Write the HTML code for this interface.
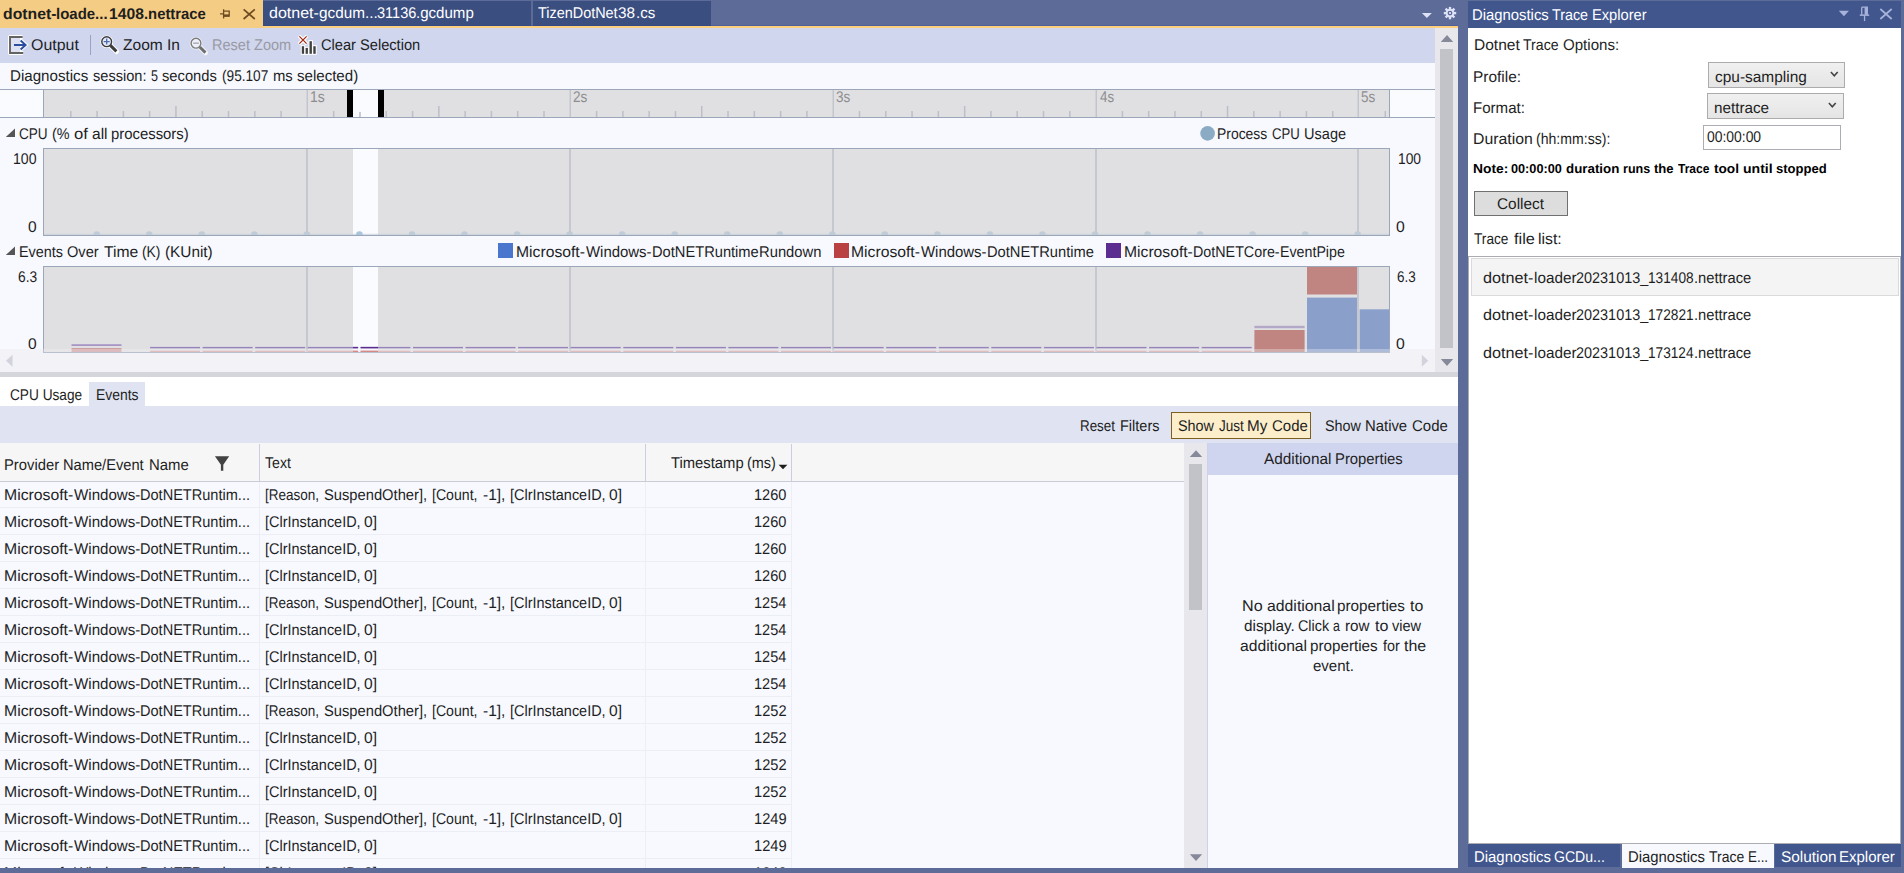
<!DOCTYPE html>
<html><head><meta charset="utf-8"><title>Diagnostics</title>
<style>
html,body{margin:0;padding:0}
body{width:1904px;height:873px;overflow:hidden;background:#5d6b99;position:relative;font-family:"Liberation Sans",sans-serif}
#r{position:absolute;left:0;top:0;width:1904px;height:873px;overflow:hidden}
#r div{position:absolute}
.a{position:absolute;overflow:visible}
#r div.t{white-space:nowrap;line-height:20px;height:20px;transform-origin:0 0;text-rendering:geometricPrecision}
#clip{position:absolute;left:0;top:0;width:1904px;height:868px;overflow:hidden}
</style></head><body><div id="r"><div id="clip">
<div style="left:0px;top:0px;width:263px;height:28px;background:#f5cc84;"></div>
<div style="left:263px;top:1px;width:268px;height:25px;background:#3b4e80;"></div>
<div style="left:533px;top:1px;width:178px;height:25px;background:#3b4e80;"></div>
<div style="left:263px;top:25px;width:1195px;height:1px;background:rgba(40,64,150,0.22);"></div>
<div style="left:263px;top:26px;width:1195px;height:2px;background:#fcd07c;"></div>
<div class="t" style="left:2.96px;top:5px;font-size:15.5px;color:#1e1e1e;transform:scaleX(1.0185);font-weight:700;">dotnet-</div>
<div class="t" style="left:56.01px;top:5px;font-size:15.5px;color:#1e1e1e;transform:scaleX(0.9659);font-weight:700;">loade...</div>
<div class="t" style="left:108.79px;top:5px;font-size:15.5px;color:#1e1e1e;transform:scaleX(1.0121);font-weight:700;">1408</div>
<div class="t" style="left:144.24px;top:5px;font-size:15.5px;color:#1e1e1e;transform:scaleX(0.9568);font-weight:700;">.nettrace</div>
<div class="t" style="left:269.06px;top:4px;font-size:15.5px;color:#ffffff;transform:scaleX(1.0319);">dotnet-</div>
<div class="t" style="left:319.08px;top:4px;font-size:15.5px;color:#ffffff;transform:scaleX(0.9882);">gcdum...</div>
<div class="t" style="left:376.81px;top:4px;font-size:15.5px;color:#ffffff;transform:scaleX(0.9399);">31136</div>
<div class="t" style="left:416.46px;top:4px;font-size:15.5px;color:#ffffff;transform:scaleX(0.9722);">.gcdump</div>
<div class="t" style="left:538.45px;top:4px;font-size:15.5px;color:#ffffff;transform:scaleX(0.9304);">TizenDotNet</div>
<div class="t" style="left:618.38px;top:4px;font-size:15.5px;color:#ffffff;transform:scaleX(0.9875);">38</div>
<div class="t" style="left:635.56px;top:4px;font-size:15.5px;color:#ffffff;transform:scaleX(0.9734);">.cs</div>
<div style="left:0px;top:28px;width:1435px;height:35px;background:#cfd6ee;"></div>
<div class="t" style="left:31.23px;top:36px;font-size:15.5px;color:#1e1e1e;transform:scaleX(1.0273);">Output</div>
<div style="left:90px;top:35px;width:1px;height:20px;background:#9aa3c4;"></div>
<div class="t" style="left:123.00px;top:36px;font-size:15.5px;color:#1e1e1e;transform:scaleX(1.0023);">Zoom In</div>
<div class="t" style="left:211.83px;top:36px;font-size:15.5px;color:#9a9aa4;transform:scaleX(0.9376);">Reset Zoom</div>
<div class="t" style="left:321.29px;top:36px;font-size:15.5px;color:#1e1e1e;transform:scaleX(0.9432);">Clear Selection</div>
<div style="left:0px;top:63px;width:1435px;height:309px;background:#f7f9fe;"></div>
<div class="t" style="left:10.38px;top:67px;font-size:15.5px;color:#1e1e1e;transform:scaleX(0.9761);">Diagnostics</div>
<div class="t" style="left:93.33px;top:67px;font-size:15.5px;color:#1e1e1e;transform:scaleX(0.9403);">session:</div>
<div class="t" style="left:150.59px;top:67px;font-size:15.5px;color:#1e1e1e;transform:scaleX(0.8136);">5</div>
<div class="t" style="left:162.33px;top:67px;font-size:15.5px;color:#1e1e1e;transform:scaleX(0.9498);">seconds</div>
<div class="t" style="left:221.52px;top:67px;font-size:15.5px;color:#1e1e1e;transform:scaleX(0.8806);">(95.107</div>
<div class="t" style="left:273.04px;top:67px;font-size:15.5px;color:#1e1e1e;transform:scaleX(0.9569);">ms</div>
<div class="t" style="left:296.91px;top:67px;font-size:15.5px;color:#1e1e1e;transform:scaleX(0.9724);">selected)</div>
<div style="left:0px;top:89px;width:1435px;height:1px;background:#9ca6b9;"></div>
<div style="left:0px;top:117px;width:1435px;height:1px;background:#9ca6b9;"></div>
<div style="left:0px;top:90px;width:43px;height:27px;background:#fafbff;"></div>
<div style="left:1390px;top:90px;width:45px;height:27px;background:#fafbff;"></div>
<div style="left:43px;top:90px;width:1px;height:27px;background:#9ca6b9;"></div>
<div style="left:1389px;top:90px;width:1px;height:27px;background:#9ca6b9;"></div>
<div style="left:44px;top:90px;width:1345px;height:27px;background:#e0e0e2;"></div>
<svg class="a" style="left:0;top:0" width="1435" height="118"><rect x="70.04" y="111" width="1.5" height="6" fill="#bcbfc9"/><rect x="96.33" y="111" width="1.5" height="6" fill="#bcbfc9"/><rect x="122.62" y="111" width="1.5" height="6" fill="#bcbfc9"/><rect x="148.91" y="111" width="1.5" height="6" fill="#bcbfc9"/><rect x="175.20" y="106" width="1.5" height="11" fill="#bcbfc9"/><rect x="201.49" y="111" width="1.5" height="6" fill="#bcbfc9"/><rect x="227.78" y="111" width="1.5" height="6" fill="#bcbfc9"/><rect x="254.07" y="111" width="1.5" height="6" fill="#bcbfc9"/><rect x="280.36" y="111" width="1.5" height="6" fill="#bcbfc9"/><rect x="332.94" y="111" width="1.5" height="6" fill="#bcbfc9"/><rect x="359.23" y="111" width="1.5" height="6" fill="#bcbfc9"/><rect x="385.52" y="111" width="1.5" height="6" fill="#bcbfc9"/><rect x="411.81" y="111" width="1.5" height="6" fill="#bcbfc9"/><rect x="438.10" y="106" width="1.5" height="11" fill="#bcbfc9"/><rect x="464.39" y="111" width="1.5" height="6" fill="#bcbfc9"/><rect x="490.68" y="111" width="1.5" height="6" fill="#bcbfc9"/><rect x="516.97" y="111" width="1.5" height="6" fill="#bcbfc9"/><rect x="543.26" y="111" width="1.5" height="6" fill="#bcbfc9"/><rect x="595.84" y="111" width="1.5" height="6" fill="#bcbfc9"/><rect x="622.13" y="111" width="1.5" height="6" fill="#bcbfc9"/><rect x="648.42" y="111" width="1.5" height="6" fill="#bcbfc9"/><rect x="674.71" y="111" width="1.5" height="6" fill="#bcbfc9"/><rect x="701.00" y="106" width="1.5" height="11" fill="#bcbfc9"/><rect x="727.29" y="111" width="1.5" height="6" fill="#bcbfc9"/><rect x="753.58" y="111" width="1.5" height="6" fill="#bcbfc9"/><rect x="779.87" y="111" width="1.5" height="6" fill="#bcbfc9"/><rect x="806.16" y="111" width="1.5" height="6" fill="#bcbfc9"/><rect x="858.74" y="111" width="1.5" height="6" fill="#bcbfc9"/><rect x="885.03" y="111" width="1.5" height="6" fill="#bcbfc9"/><rect x="911.32" y="111" width="1.5" height="6" fill="#bcbfc9"/><rect x="937.61" y="111" width="1.5" height="6" fill="#bcbfc9"/><rect x="963.90" y="106" width="1.5" height="11" fill="#bcbfc9"/><rect x="990.19" y="111" width="1.5" height="6" fill="#bcbfc9"/><rect x="1016.48" y="111" width="1.5" height="6" fill="#bcbfc9"/><rect x="1042.77" y="111" width="1.5" height="6" fill="#bcbfc9"/><rect x="1069.06" y="111" width="1.5" height="6" fill="#bcbfc9"/><rect x="1121.64" y="111" width="1.5" height="6" fill="#bcbfc9"/><rect x="1147.93" y="111" width="1.5" height="6" fill="#bcbfc9"/><rect x="1174.22" y="111" width="1.5" height="6" fill="#bcbfc9"/><rect x="1200.51" y="111" width="1.5" height="6" fill="#bcbfc9"/><rect x="1226.80" y="106" width="1.5" height="11" fill="#bcbfc9"/><rect x="1253.09" y="111" width="1.5" height="6" fill="#bcbfc9"/><rect x="1279.38" y="111" width="1.5" height="6" fill="#bcbfc9"/><rect x="1305.67" y="111" width="1.5" height="6" fill="#bcbfc9"/><rect x="1331.96" y="111" width="1.5" height="6" fill="#bcbfc9"/><rect x="1384.54" y="111" width="1.5" height="6" fill="#bcbfc9"/><rect x="306.5" y="90" width="1.5" height="27" fill="#c3c5cd"/><rect x="569.5" y="90" width="1.5" height="27" fill="#c3c5cd"/><rect x="832.5" y="90" width="1.5" height="27" fill="#c3c5cd"/><rect x="1095.5" y="90" width="1.5" height="27" fill="#c3c5cd"/><rect x="1357.5" y="90" width="1.5" height="27" fill="#c3c5cd"/></svg>
<div class="t" style="left:309.99px;top:88px;font-size:15.5px;color:#8d8d90;transform:scaleX(0.9017);">1s</div>
<div class="t" style="left:573.34px;top:88px;font-size:15.5px;color:#8d8d90;transform:scaleX(0.8793);">2s</div>
<div class="t" style="left:836.45px;top:88px;font-size:15.5px;color:#8d8d90;transform:scaleX(0.8721);">3s</div>
<div class="t" style="left:1099.68px;top:88px;font-size:15.5px;color:#8d8d90;transform:scaleX(0.8581);">4s</div>
<div class="t" style="left:1361.45px;top:88px;font-size:15.5px;color:#8d8d90;transform:scaleX(0.8721);">5s</div>
<div style="left:353px;top:90px;width:25px;height:27px;background:#fafbff;"></div>
<div style="left:359.3px;top:112px;width:1.5px;height:5px;background:#c9ccd8;"></div>
<div style="left:347px;top:90px;width:6px;height:27px;background:#000;"></div>
<div style="left:378px;top:90px;width:6px;height:27px;background:#000;"></div>
<svg class="a" style="left:5px;top:128px" width="11" height="10"><path d="M10 0.5V9H0.8Z" fill="#555"/></svg>
<div class="t" style="left:19.24px;top:125px;font-size:15.5px;color:#1e1e1e;transform:scaleX(0.8748);">CPU</div>
<div class="t" style="left:51.97px;top:125px;font-size:15.5px;color:#1e1e1e;transform:scaleX(0.9266);">(%</div>
<div class="t" style="left:73.83px;top:125px;font-size:15.5px;color:#1e1e1e;transform:scaleX(1.0747);">of</div>
<div class="t" style="left:91.57px;top:125px;font-size:15.5px;color:#1e1e1e;transform:scaleX(1.0018);">all</div>
<div class="t" style="left:111.34px;top:125px;font-size:15.5px;color:#1e1e1e;transform:scaleX(0.9595);">processors)</div>
<svg class="a" style="left:1200px;top:126px" width="16" height="16"><circle cx="7.6" cy="7.4" r="7.3" fill="#8babc5"/></svg>
<div class="t" style="left:1217.28px;top:125px;font-size:15.5px;color:#1e1e1e;transform:scaleX(0.8977);">Process</div>
<div class="t" style="left:1271.76px;top:125px;font-size:15.5px;color:#1e1e1e;transform:scaleX(0.8488);">CPU</div>
<div class="t" style="left:1303.54px;top:125px;font-size:15.5px;color:#1e1e1e;transform:scaleX(0.9395);">Usage</div>
<div style="left:43px;top:148px;width:1347px;height:88px;background:#e0e0e2;"></div>
<div style="left:353px;top:149px;width:25px;height:86px;background:#fafbff;"></div>
<div style="left:306px;top:149px;width:2px;height:86px;background:#c6c8cf;"></div>
<div style="left:569px;top:149px;width:2px;height:86px;background:#c6c8cf;"></div>
<div style="left:832px;top:149px;width:2px;height:86px;background:#c6c8cf;"></div>
<div style="left:1095px;top:149px;width:2px;height:86px;background:#c6c8cf;"></div>
<div style="left:1357px;top:149px;width:2px;height:86px;background:#c6c8cf;"></div>
<div class="t" style="left:13.48px;top:150px;font-size:15.5px;color:#1e1e1e;transform:scaleX(0.9078);">100</div>
<div class="t" style="left:28.37px;top:218px;font-size:15.5px;color:#1e1e1e;transform:scaleX(1.0034);">0</div>
<div class="t" style="left:1397.50px;top:150px;font-size:15.5px;color:#1e1e1e;transform:scaleX(0.8912);">100</div>
<div class="t" style="left:1396.36px;top:218px;font-size:15.5px;color:#1e1e1e;transform:scaleX(1.0169);">0</div>
<svg class="a" style="left:0;top:0" width="1435" height="235"><defs><clipPath id="cc"><rect x="44" y="149" width="1345" height="86"/></clipPath></defs><g clip-path="url(#cc)"><rect x="44" y="233.8" width="1345" height="1.2" fill="#c5d1dc" opacity="0.7"/><circle cx="96.7" cy="234.6" r="3.3" fill="#bfccd7"/><circle cx="149.3" cy="234.6" r="3.3" fill="#bfccd7"/><circle cx="201.8" cy="234.6" r="3.3" fill="#bfccd7"/><circle cx="254.4" cy="234.6" r="3.3" fill="#bfccd7"/><circle cx="306.9" cy="234.6" r="3.3" fill="#bfccd7"/><circle cx="359.4" cy="234.6" r="3.3" fill="#a9c5db"/><circle cx="412.0" cy="234.6" r="3.3" fill="#bfccd7"/><circle cx="464.5" cy="234.6" r="3.3" fill="#bfccd7"/><circle cx="517.1" cy="234.6" r="3.3" fill="#bfccd7"/><circle cx="569.6" cy="234.6" r="3.3" fill="#bfccd7"/><circle cx="622.1" cy="234.6" r="3.3" fill="#bfccd7"/><circle cx="674.7" cy="234.6" r="3.3" fill="#bfccd7"/><circle cx="727.2" cy="234.6" r="3.3" fill="#bfccd7"/><circle cx="779.8" cy="234.6" r="3.3" fill="#bfccd7"/><circle cx="832.3" cy="234.6" r="3.3" fill="#bfccd7"/><circle cx="884.8" cy="234.6" r="3.3" fill="#bfccd7"/><circle cx="937.4" cy="234.6" r="3.3" fill="#bfccd7"/><circle cx="989.9" cy="234.6" r="3.3" fill="#bfccd7"/><circle cx="1042.5" cy="234.6" r="3.3" fill="#bfccd7"/><circle cx="1095.0" cy="234.6" r="3.3" fill="#bfccd7"/><circle cx="1147.5" cy="234.6" r="3.3" fill="#bfccd7"/><circle cx="1200.1" cy="234.6" r="3.3" fill="#bfccd7"/><circle cx="1252.6" cy="234.6" r="3.3" fill="#bfccd7"/><circle cx="1305.2" cy="234.6" r="3.3" fill="#bfccd7"/><circle cx="1357.7" cy="234.6" r="3.3" fill="#bfccd7"/></g></svg>
<div style="left:43px;top:148px;width:1347px;height:88px;box-sizing:border-box;border:1px solid #9ca6b9;"></div>
<svg class="a" style="left:5px;top:246px" width="11" height="10"><path d="M10 0.5V9H0.8Z" fill="#555"/></svg>
<div class="t" style="left:19.44px;top:243px;font-size:15.5px;color:#1e1e1e;transform:scaleX(0.9293);">Events</div>
<div class="t" style="left:67.49px;top:243px;font-size:15.5px;color:#1e1e1e;transform:scaleX(0.9415);">Over</div>
<div class="t" style="left:103.62px;top:243px;font-size:15.5px;color:#1e1e1e;transform:scaleX(1.0129);">Time</div>
<div class="t" style="left:141.81px;top:243px;font-size:15.5px;color:#1e1e1e;transform:scaleX(0.8907);">(K)</div>
<div class="t" style="left:164.51px;top:243px;font-size:15.5px;color:#1e1e1e;transform:scaleX(0.9898);">(KUnit)</div>
<div style="left:498px;top:243px;width:15px;height:15px;background:#4a76ce;"></div>
<div class="t" style="left:515.93px;top:243px;font-size:15.5px;color:#1e1e1e;transform:scaleX(1.0132);">Microsoft-</div>
<div class="t" style="left:585.88px;top:243px;font-size:15.5px;color:#1e1e1e;transform:scaleX(0.9636);">Windows-</div>
<div class="t" style="left:651.72px;top:243px;font-size:15.5px;color:#1e1e1e;transform:scaleX(0.9459);">DotNETRuntime</div>
<div class="t" style="left:758.91px;top:243px;font-size:15.5px;color:#1e1e1e;transform:scaleX(0.9534);">Rundown</div>
<div style="left:834px;top:243px;width:15px;height:15px;background:#b94141;"></div>
<div class="t" style="left:851.03px;top:243px;font-size:15.5px;color:#1e1e1e;transform:scaleX(1.0132);">Microsoft-</div>
<div class="t" style="left:920.98px;top:243px;font-size:15.5px;color:#1e1e1e;transform:scaleX(0.9636);">Windows-</div>
<div class="t" style="left:986.82px;top:243px;font-size:15.5px;color:#1e1e1e;transform:scaleX(0.9477);">DotNETRuntime</div>
<div style="left:1106px;top:243px;width:15px;height:15px;background:#5b2d90;"></div>
<div class="t" style="left:1123.64px;top:243px;font-size:15.5px;color:#1e1e1e;transform:scaleX(1.0117);">Microsoft-</div>
<div class="t" style="left:1192.85px;top:243px;font-size:15.5px;color:#1e1e1e;transform:scaleX(0.9228);">DotNETCore-</div>
<div class="t" style="left:1280.15px;top:243px;font-size:15.5px;color:#1e1e1e;transform:scaleX(0.9178);">EventPipe</div>
<div style="left:43px;top:266px;width:1347px;height:87px;background:#e0e0e2;"></div>
<div style="left:353px;top:267px;width:25px;height:85px;background:#fafbff;"></div>
<div style="left:306px;top:267px;width:2px;height:85px;background:#c6c8cf;"></div>
<div style="left:569px;top:267px;width:2px;height:85px;background:#c6c8cf;"></div>
<div style="left:832px;top:267px;width:2px;height:85px;background:#c6c8cf;"></div>
<div style="left:1095px;top:267px;width:2px;height:85px;background:#c6c8cf;"></div>
<div style="left:1357px;top:267px;width:2px;height:85px;background:#c6c8cf;"></div>
<div class="t" style="left:17.83px;top:268px;font-size:15.5px;color:#1e1e1e;transform:scaleX(0.8894);">6.3</div>
<div class="t" style="left:28.37px;top:335px;font-size:15.5px;color:#1e1e1e;transform:scaleX(1.0034);">0</div>
<div class="t" style="left:1396.85px;top:268px;font-size:15.5px;color:#1e1e1e;transform:scaleX(0.8696);">6.3</div>
<div class="t" style="left:1396.36px;top:335px;font-size:15.5px;color:#1e1e1e;transform:scaleX(1.0169);">0</div>
<svg class="a" style="left:0;top:0" width="1435" height="353"><rect x="71.5" y="344.2" width="50" height="1.8" fill="#a897c6"/><rect x="71.5" y="348" width="50" height="4" fill="#cf9f9f"/><rect x="150.1" y="346.9" width="50" height="1.4" fill="#9583ba"/><rect x="150.1" y="350.7" width="50" height="1.4" fill="#dba29e"/><rect x="202.6" y="346.9" width="50" height="1.4" fill="#9583ba"/><rect x="202.6" y="350.7" width="50" height="1.4" fill="#dba29e"/><rect x="255.2" y="346.9" width="50" height="1.4" fill="#9583ba"/><rect x="255.2" y="350.7" width="50" height="1.4" fill="#dba29e"/><rect x="307.8" y="346.9" width="50" height="1.4" fill="#9583ba"/><rect x="307.8" y="350.7" width="50" height="1.4" fill="#dba29e"/><rect x="360.4" y="346.9" width="50" height="1.4" fill="#9583ba"/><rect x="360.4" y="350.7" width="50" height="1.4" fill="#dba29e"/><rect x="413.0" y="346.9" width="50" height="1.4" fill="#9583ba"/><rect x="413.0" y="350.7" width="50" height="1.4" fill="#dba29e"/><rect x="465.5" y="346.9" width="50" height="1.4" fill="#9583ba"/><rect x="465.5" y="350.7" width="50" height="1.4" fill="#dba29e"/><rect x="518.1" y="346.9" width="50" height="1.4" fill="#9583ba"/><rect x="518.1" y="350.7" width="50" height="1.4" fill="#dba29e"/><rect x="570.7" y="346.9" width="50" height="1.4" fill="#9583ba"/><rect x="570.7" y="350.7" width="50" height="1.4" fill="#dba29e"/><rect x="623.3" y="346.9" width="50" height="1.4" fill="#9583ba"/><rect x="623.3" y="350.7" width="50" height="1.4" fill="#dba29e"/><rect x="675.9" y="346.9" width="50" height="1.4" fill="#9583ba"/><rect x="675.9" y="350.7" width="50" height="1.4" fill="#dba29e"/><rect x="728.4" y="346.9" width="50" height="1.4" fill="#9583ba"/><rect x="728.4" y="350.7" width="50" height="1.4" fill="#dba29e"/><rect x="781.0" y="346.9" width="50" height="1.4" fill="#9583ba"/><rect x="781.0" y="350.7" width="50" height="1.4" fill="#dba29e"/><rect x="833.6" y="346.9" width="50" height="1.4" fill="#9583ba"/><rect x="833.6" y="350.7" width="50" height="1.4" fill="#dba29e"/><rect x="886.2" y="346.9" width="50" height="1.4" fill="#9583ba"/><rect x="886.2" y="350.7" width="50" height="1.4" fill="#dba29e"/><rect x="938.8" y="346.9" width="50" height="1.4" fill="#9583ba"/><rect x="938.8" y="350.7" width="50" height="1.4" fill="#dba29e"/><rect x="991.3" y="346.9" width="50" height="1.4" fill="#9583ba"/><rect x="991.3" y="350.7" width="50" height="1.4" fill="#dba29e"/><rect x="1043.9" y="346.9" width="50" height="1.4" fill="#9583ba"/><rect x="1043.9" y="350.7" width="50" height="1.4" fill="#dba29e"/><rect x="1096.5" y="346.9" width="50" height="1.4" fill="#9583ba"/><rect x="1096.5" y="350.7" width="50" height="1.4" fill="#dba29e"/><rect x="1149.1" y="346.9" width="50" height="1.4" fill="#9583ba"/><rect x="1149.1" y="350.7" width="50" height="1.4" fill="#dba29e"/><rect x="1201.7" y="346.9" width="50" height="1.4" fill="#9583ba"/><rect x="1201.7" y="350.7" width="50" height="1.4" fill="#dba29e"/><rect x="1254.4" y="325.8" width="50.2" height="2.4" fill="#b3a8c8"/><rect x="1254.4" y="330" width="50.2" height="22" fill="#c08481"/><rect x="1307" y="267" width="50" height="27.5" fill="#c08481"/><rect x="1307" y="297.6" width="50" height="54.4" fill="#8aa0cb"/><rect x="1359.6" y="309.3" width="29.4" height="42.7" fill="#8aa0cb"/><rect x="353" y="346.9" width="5.2" height="1.4" fill="#5b2d90"/><rect x="360.7" y="346.9" width="17.3" height="1.4" fill="#5b2d90"/><rect x="353" y="350.7" width="5.2" height="1.4" fill="#c9504d"/><rect x="360.7" y="350.7" width="17.3" height="1.4" fill="#c9504d"/></svg>
<div style="left:43px;top:266px;width:1347px;height:87px;box-sizing:border-box;border:1px solid #9ca6b9;"></div>
<div style="left:43px;top:349px;width:1347px;height:4px;background:rgba(242,242,247,0.35);"></div>
<div style="left:0px;top:349px;width:43px;height:4px;background:#f2f2f7;"></div>
<div style="left:1390px;top:349px;width:45px;height:4px;background:#f2f2f7;"></div>
<div style="left:0px;top:353px;width:1435px;height:19px;background:#f2f2f7;"></div>
<svg class="a" style="left:4.5px;top:354.4px" width="10" height="14"><path d="M7.5 0.8V12.8L1 6.8Z" fill="#d2d3dc"/></svg>
<svg class="a" style="left:1420px;top:354px" width="10" height="14"><path d="M1.8 0.8V12.8L8.3 6.8Z" fill="#d2d3dc"/></svg>
<div style="left:1435px;top:28px;width:23px;height:344px;background:#e8e8ec;"></div>
<div style="left:1440px;top:49px;width:13px;height:299px;background:#c2c3c9;"></div>
<svg class="a" style="left:1440px;top:34px" width="14" height="9"><path d="M0.8 8L7 1L13.2 8Z" fill="#868999"/></svg>
<svg class="a" style="left:1440px;top:358px" width="14" height="9"><path d="M0.8 1L7 8L13.2 1Z" fill="#868999"/></svg>
<div style="left:0px;top:372px;width:1458px;height:5px;background:#d5d6db;"></div>
<div style="left:0px;top:377px;width:1458px;height:29px;background:#ffffff;"></div>
<div style="left:89px;top:382px;width:56px;height:24px;background:#e0e4f2;"></div>
<div class="t" style="left:9.64px;top:386px;font-size:15.5px;color:#1e1e1e;transform:scaleX(0.8820);">CPU Usage</div>
<div class="t" style="left:95.88px;top:386px;font-size:15.5px;color:#1e1e1e;transform:scaleX(0.8986);">Events</div>
<div style="left:0px;top:406px;width:1458px;height:37px;background:#e0e4f2;"></div>
<div class="t" style="left:1080.22px;top:417px;font-size:15.5px;color:#1e1e1e;transform:scaleX(0.8639);">Reset</div>
<div class="t" style="left:1120.03px;top:417px;font-size:15.5px;color:#1e1e1e;transform:scaleX(0.9358);">Filters</div>
<div style="left:1171px;top:412px;width:140px;height:27px;background:#fceecb;box-sizing:border-box;border:1px solid #7d6020;"></div>
<div class="t" style="left:1177.90px;top:417px;font-size:15.5px;color:#1e1e1e;transform:scaleX(0.9285);">Show</div>
<div class="t" style="left:1218.88px;top:417px;font-size:15.5px;color:#1e1e1e;transform:scaleX(0.8747);">Just</div>
<div class="t" style="left:1247.37px;top:417px;font-size:15.5px;color:#1e1e1e;transform:scaleX(0.9858);">My</div>
<div class="t" style="left:1272.08px;top:417px;font-size:15.5px;color:#1e1e1e;transform:scaleX(0.9656);">Code</div>
<div class="t" style="left:1324.91px;top:417px;font-size:15.5px;color:#1e1e1e;transform:scaleX(0.9259);">Show</div>
<div class="t" style="left:1365.40px;top:417px;font-size:15.5px;color:#1e1e1e;transform:scaleX(0.9591);">Native</div>
<div class="t" style="left:1411.78px;top:417px;font-size:15.5px;color:#1e1e1e;transform:scaleX(0.9656);">Code</div>
<div style="left:0px;top:443px;width:1184px;height:38px;background:#f6f6f6;"></div>
<div style="left:0px;top:481px;width:1184px;height:1px;background:#cbccd9;"></div>
<div style="left:0px;top:482px;width:1184px;height:386px;background:#f7f9fe;"></div>
<div style="left:259px;top:444px;width:1px;height:37px;background:#cbcde0;"></div>
<div style="left:259px;top:482px;width:1px;height:386px;background:#eceef6;"></div>
<div style="left:645px;top:444px;width:1px;height:37px;background:#cbcde0;"></div>
<div style="left:645px;top:482px;width:1px;height:386px;background:#eceef6;"></div>
<div style="left:791px;top:444px;width:1px;height:37px;background:#cbcde0;"></div>
<div style="left:791px;top:482px;width:1px;height:386px;background:#eceef6;"></div>
<div class="t" style="left:3.51px;top:456px;font-size:15.5px;color:#1e1e1e;transform:scaleX(0.9550);">Provider</div>
<div class="t" style="left:63.12px;top:456px;font-size:15.5px;color:#1e1e1e;transform:scaleX(0.9452);">Name/Event</div>
<div class="t" style="left:148.80px;top:456px;font-size:15.5px;color:#1e1e1e;transform:scaleX(0.9620);">Name</div>
<svg class="a" style="left:214px;top:455px" width="17" height="17"><path d="M0.9 1.3H15.2L9.3 9.8V15.8H6.9V9.8Z" fill="#424242"/></svg>
<div class="t" style="left:264.96px;top:454px;font-size:15.5px;color:#1e1e1e;transform:scaleX(0.9107);">Text</div>
<div class="t" style="left:670.84px;top:454px;font-size:15.5px;color:#1e1e1e;transform:scaleX(0.9544);">Timestamp</div>
<div class="t" style="left:747.47px;top:454px;font-size:15.5px;color:#1e1e1e;transform:scaleX(0.9305);">(ms)</div>
<svg class="a" style="left:778px;top:464px" width="10" height="6"><path d="M0.6 0.8H9.4L5 5.3Z" fill="#1e1e1e"/></svg>
<div style="left:0px;top:507px;width:792px;height:1px;background:#eceef6;"></div>
<div class="t" style="left:3.53px;top:486px;font-size:15.5px;color:#1e1e1e;transform:scaleX(1.0178);">Microsoft-</div>
<div class="t" style="left:73.58px;top:486px;font-size:15.5px;color:#1e1e1e;transform:scaleX(0.9755);">Windows-</div>
<div class="t" style="left:140.13px;top:486px;font-size:15.5px;color:#1e1e1e;transform:scaleX(0.9389);">DotNETRuntim...</div>
<div class="t" style="left:265.42px;top:486px;font-size:15.5px;color:#1e1e1e;transform:scaleX(0.8723);">[Reason,</div>
<div class="t" style="left:324.39px;top:486px;font-size:15.5px;color:#1e1e1e;transform:scaleX(0.9495);">SuspendOther],</div>
<div class="t" style="left:431.58px;top:486px;font-size:15.5px;color:#1e1e1e;transform:scaleX(0.9098);">[Count,</div>
<div class="t" style="left:482.87px;top:486px;font-size:15.5px;color:#1e1e1e;transform:scaleX(1.0012);">-1],</div>
<div class="t" style="left:509.65px;top:486px;font-size:15.5px;color:#1e1e1e;transform:scaleX(0.9330);">[ClrInstanceID,</div>
<div class="t" style="left:608.57px;top:486px;font-size:15.5px;color:#1e1e1e;transform:scaleX(1.0044);">0]</div>
<div class="t" style="left:753.94px;top:486px;font-size:15.5px;color:#1e1e1e;transform:scaleX(0.9405);">1260</div>
<div style="left:0px;top:534px;width:792px;height:1px;background:#eceef6;"></div>
<div class="t" style="left:3.53px;top:513px;font-size:15.5px;color:#1e1e1e;transform:scaleX(1.0178);">Microsoft-</div>
<div class="t" style="left:73.58px;top:513px;font-size:15.5px;color:#1e1e1e;transform:scaleX(0.9755);">Windows-</div>
<div class="t" style="left:140.13px;top:513px;font-size:15.5px;color:#1e1e1e;transform:scaleX(0.9389);">DotNETRuntim...</div>
<div class="t" style="left:265.35px;top:513px;font-size:15.5px;color:#1e1e1e;transform:scaleX(0.9330);">[ClrInstanceID,</div>
<div class="t" style="left:364.27px;top:513px;font-size:15.5px;color:#1e1e1e;transform:scaleX(1.0044);">0]</div>
<div class="t" style="left:753.94px;top:513px;font-size:15.5px;color:#1e1e1e;transform:scaleX(0.9405);">1260</div>
<div style="left:0px;top:561px;width:792px;height:1px;background:#eceef6;"></div>
<div class="t" style="left:3.53px;top:540px;font-size:15.5px;color:#1e1e1e;transform:scaleX(1.0178);">Microsoft-</div>
<div class="t" style="left:73.58px;top:540px;font-size:15.5px;color:#1e1e1e;transform:scaleX(0.9755);">Windows-</div>
<div class="t" style="left:140.13px;top:540px;font-size:15.5px;color:#1e1e1e;transform:scaleX(0.9389);">DotNETRuntim...</div>
<div class="t" style="left:265.35px;top:540px;font-size:15.5px;color:#1e1e1e;transform:scaleX(0.9330);">[ClrInstanceID,</div>
<div class="t" style="left:364.27px;top:540px;font-size:15.5px;color:#1e1e1e;transform:scaleX(1.0044);">0]</div>
<div class="t" style="left:753.94px;top:540px;font-size:15.5px;color:#1e1e1e;transform:scaleX(0.9405);">1260</div>
<div style="left:0px;top:588px;width:792px;height:1px;background:#eceef6;"></div>
<div class="t" style="left:3.53px;top:567px;font-size:15.5px;color:#1e1e1e;transform:scaleX(1.0178);">Microsoft-</div>
<div class="t" style="left:73.58px;top:567px;font-size:15.5px;color:#1e1e1e;transform:scaleX(0.9755);">Windows-</div>
<div class="t" style="left:140.13px;top:567px;font-size:15.5px;color:#1e1e1e;transform:scaleX(0.9389);">DotNETRuntim...</div>
<div class="t" style="left:265.35px;top:567px;font-size:15.5px;color:#1e1e1e;transform:scaleX(0.9330);">[ClrInstanceID,</div>
<div class="t" style="left:364.27px;top:567px;font-size:15.5px;color:#1e1e1e;transform:scaleX(1.0044);">0]</div>
<div class="t" style="left:753.94px;top:567px;font-size:15.5px;color:#1e1e1e;transform:scaleX(0.9405);">1260</div>
<div style="left:0px;top:615px;width:792px;height:1px;background:#eceef6;"></div>
<div class="t" style="left:3.53px;top:594px;font-size:15.5px;color:#1e1e1e;transform:scaleX(1.0178);">Microsoft-</div>
<div class="t" style="left:73.58px;top:594px;font-size:15.5px;color:#1e1e1e;transform:scaleX(0.9755);">Windows-</div>
<div class="t" style="left:140.13px;top:594px;font-size:15.5px;color:#1e1e1e;transform:scaleX(0.9389);">DotNETRuntim...</div>
<div class="t" style="left:265.42px;top:594px;font-size:15.5px;color:#1e1e1e;transform:scaleX(0.8723);">[Reason,</div>
<div class="t" style="left:324.39px;top:594px;font-size:15.5px;color:#1e1e1e;transform:scaleX(0.9495);">SuspendOther],</div>
<div class="t" style="left:431.58px;top:594px;font-size:15.5px;color:#1e1e1e;transform:scaleX(0.9098);">[Count,</div>
<div class="t" style="left:482.87px;top:594px;font-size:15.5px;color:#1e1e1e;transform:scaleX(1.0012);">-1],</div>
<div class="t" style="left:509.65px;top:594px;font-size:15.5px;color:#1e1e1e;transform:scaleX(0.9330);">[ClrInstanceID,</div>
<div class="t" style="left:608.57px;top:594px;font-size:15.5px;color:#1e1e1e;transform:scaleX(1.0044);">0]</div>
<div class="t" style="left:753.95px;top:594px;font-size:15.5px;color:#1e1e1e;transform:scaleX(0.9369);">1254</div>
<div style="left:0px;top:642px;width:792px;height:1px;background:#eceef6;"></div>
<div class="t" style="left:3.53px;top:621px;font-size:15.5px;color:#1e1e1e;transform:scaleX(1.0178);">Microsoft-</div>
<div class="t" style="left:73.58px;top:621px;font-size:15.5px;color:#1e1e1e;transform:scaleX(0.9755);">Windows-</div>
<div class="t" style="left:140.13px;top:621px;font-size:15.5px;color:#1e1e1e;transform:scaleX(0.9389);">DotNETRuntim...</div>
<div class="t" style="left:265.35px;top:621px;font-size:15.5px;color:#1e1e1e;transform:scaleX(0.9330);">[ClrInstanceID,</div>
<div class="t" style="left:364.27px;top:621px;font-size:15.5px;color:#1e1e1e;transform:scaleX(1.0044);">0]</div>
<div class="t" style="left:753.95px;top:621px;font-size:15.5px;color:#1e1e1e;transform:scaleX(0.9369);">1254</div>
<div style="left:0px;top:669px;width:792px;height:1px;background:#eceef6;"></div>
<div class="t" style="left:3.53px;top:648px;font-size:15.5px;color:#1e1e1e;transform:scaleX(1.0178);">Microsoft-</div>
<div class="t" style="left:73.58px;top:648px;font-size:15.5px;color:#1e1e1e;transform:scaleX(0.9755);">Windows-</div>
<div class="t" style="left:140.13px;top:648px;font-size:15.5px;color:#1e1e1e;transform:scaleX(0.9389);">DotNETRuntim...</div>
<div class="t" style="left:265.35px;top:648px;font-size:15.5px;color:#1e1e1e;transform:scaleX(0.9330);">[ClrInstanceID,</div>
<div class="t" style="left:364.27px;top:648px;font-size:15.5px;color:#1e1e1e;transform:scaleX(1.0044);">0]</div>
<div class="t" style="left:753.95px;top:648px;font-size:15.5px;color:#1e1e1e;transform:scaleX(0.9369);">1254</div>
<div style="left:0px;top:696px;width:792px;height:1px;background:#eceef6;"></div>
<div class="t" style="left:3.53px;top:675px;font-size:15.5px;color:#1e1e1e;transform:scaleX(1.0178);">Microsoft-</div>
<div class="t" style="left:73.58px;top:675px;font-size:15.5px;color:#1e1e1e;transform:scaleX(0.9755);">Windows-</div>
<div class="t" style="left:140.13px;top:675px;font-size:15.5px;color:#1e1e1e;transform:scaleX(0.9389);">DotNETRuntim...</div>
<div class="t" style="left:265.35px;top:675px;font-size:15.5px;color:#1e1e1e;transform:scaleX(0.9330);">[ClrInstanceID,</div>
<div class="t" style="left:364.27px;top:675px;font-size:15.5px;color:#1e1e1e;transform:scaleX(1.0044);">0]</div>
<div class="t" style="left:753.95px;top:675px;font-size:15.5px;color:#1e1e1e;transform:scaleX(0.9369);">1254</div>
<div style="left:0px;top:723px;width:792px;height:1px;background:#eceef6;"></div>
<div class="t" style="left:3.53px;top:702px;font-size:15.5px;color:#1e1e1e;transform:scaleX(1.0178);">Microsoft-</div>
<div class="t" style="left:73.58px;top:702px;font-size:15.5px;color:#1e1e1e;transform:scaleX(0.9755);">Windows-</div>
<div class="t" style="left:140.13px;top:702px;font-size:15.5px;color:#1e1e1e;transform:scaleX(0.9389);">DotNETRuntim...</div>
<div class="t" style="left:265.42px;top:702px;font-size:15.5px;color:#1e1e1e;transform:scaleX(0.8723);">[Reason,</div>
<div class="t" style="left:324.39px;top:702px;font-size:15.5px;color:#1e1e1e;transform:scaleX(0.9495);">SuspendOther],</div>
<div class="t" style="left:431.58px;top:702px;font-size:15.5px;color:#1e1e1e;transform:scaleX(0.9098);">[Count,</div>
<div class="t" style="left:482.87px;top:702px;font-size:15.5px;color:#1e1e1e;transform:scaleX(1.0012);">-1],</div>
<div class="t" style="left:509.65px;top:702px;font-size:15.5px;color:#1e1e1e;transform:scaleX(0.9330);">[ClrInstanceID,</div>
<div class="t" style="left:608.57px;top:702px;font-size:15.5px;color:#1e1e1e;transform:scaleX(1.0044);">0]</div>
<div class="t" style="left:753.94px;top:702px;font-size:15.5px;color:#1e1e1e;transform:scaleX(0.9441);">1252</div>
<div style="left:0px;top:750px;width:792px;height:1px;background:#eceef6;"></div>
<div class="t" style="left:3.53px;top:729px;font-size:15.5px;color:#1e1e1e;transform:scaleX(1.0178);">Microsoft-</div>
<div class="t" style="left:73.58px;top:729px;font-size:15.5px;color:#1e1e1e;transform:scaleX(0.9755);">Windows-</div>
<div class="t" style="left:140.13px;top:729px;font-size:15.5px;color:#1e1e1e;transform:scaleX(0.9389);">DotNETRuntim...</div>
<div class="t" style="left:265.35px;top:729px;font-size:15.5px;color:#1e1e1e;transform:scaleX(0.9330);">[ClrInstanceID,</div>
<div class="t" style="left:364.27px;top:729px;font-size:15.5px;color:#1e1e1e;transform:scaleX(1.0044);">0]</div>
<div class="t" style="left:753.94px;top:729px;font-size:15.5px;color:#1e1e1e;transform:scaleX(0.9441);">1252</div>
<div style="left:0px;top:777px;width:792px;height:1px;background:#eceef6;"></div>
<div class="t" style="left:3.53px;top:756px;font-size:15.5px;color:#1e1e1e;transform:scaleX(1.0178);">Microsoft-</div>
<div class="t" style="left:73.58px;top:756px;font-size:15.5px;color:#1e1e1e;transform:scaleX(0.9755);">Windows-</div>
<div class="t" style="left:140.13px;top:756px;font-size:15.5px;color:#1e1e1e;transform:scaleX(0.9389);">DotNETRuntim...</div>
<div class="t" style="left:265.35px;top:756px;font-size:15.5px;color:#1e1e1e;transform:scaleX(0.9330);">[ClrInstanceID,</div>
<div class="t" style="left:364.27px;top:756px;font-size:15.5px;color:#1e1e1e;transform:scaleX(1.0044);">0]</div>
<div class="t" style="left:753.94px;top:756px;font-size:15.5px;color:#1e1e1e;transform:scaleX(0.9441);">1252</div>
<div style="left:0px;top:804px;width:792px;height:1px;background:#eceef6;"></div>
<div class="t" style="left:3.53px;top:783px;font-size:15.5px;color:#1e1e1e;transform:scaleX(1.0178);">Microsoft-</div>
<div class="t" style="left:73.58px;top:783px;font-size:15.5px;color:#1e1e1e;transform:scaleX(0.9755);">Windows-</div>
<div class="t" style="left:140.13px;top:783px;font-size:15.5px;color:#1e1e1e;transform:scaleX(0.9389);">DotNETRuntim...</div>
<div class="t" style="left:265.35px;top:783px;font-size:15.5px;color:#1e1e1e;transform:scaleX(0.9330);">[ClrInstanceID,</div>
<div class="t" style="left:364.27px;top:783px;font-size:15.5px;color:#1e1e1e;transform:scaleX(1.0044);">0]</div>
<div class="t" style="left:753.94px;top:783px;font-size:15.5px;color:#1e1e1e;transform:scaleX(0.9441);">1252</div>
<div style="left:0px;top:831px;width:792px;height:1px;background:#eceef6;"></div>
<div class="t" style="left:3.53px;top:810px;font-size:15.5px;color:#1e1e1e;transform:scaleX(1.0178);">Microsoft-</div>
<div class="t" style="left:73.58px;top:810px;font-size:15.5px;color:#1e1e1e;transform:scaleX(0.9755);">Windows-</div>
<div class="t" style="left:140.13px;top:810px;font-size:15.5px;color:#1e1e1e;transform:scaleX(0.9389);">DotNETRuntim...</div>
<div class="t" style="left:265.42px;top:810px;font-size:15.5px;color:#1e1e1e;transform:scaleX(0.8723);">[Reason,</div>
<div class="t" style="left:324.39px;top:810px;font-size:15.5px;color:#1e1e1e;transform:scaleX(0.9495);">SuspendOther],</div>
<div class="t" style="left:431.58px;top:810px;font-size:15.5px;color:#1e1e1e;transform:scaleX(0.9098);">[Count,</div>
<div class="t" style="left:482.87px;top:810px;font-size:15.5px;color:#1e1e1e;transform:scaleX(1.0012);">-1],</div>
<div class="t" style="left:509.65px;top:810px;font-size:15.5px;color:#1e1e1e;transform:scaleX(0.9330);">[ClrInstanceID,</div>
<div class="t" style="left:608.57px;top:810px;font-size:15.5px;color:#1e1e1e;transform:scaleX(1.0044);">0]</div>
<div class="t" style="left:753.94px;top:810px;font-size:15.5px;color:#1e1e1e;transform:scaleX(0.9441);">1249</div>
<div style="left:0px;top:858px;width:792px;height:1px;background:#eceef6;"></div>
<div class="t" style="left:3.53px;top:837px;font-size:15.5px;color:#1e1e1e;transform:scaleX(1.0178);">Microsoft-</div>
<div class="t" style="left:73.58px;top:837px;font-size:15.5px;color:#1e1e1e;transform:scaleX(0.9755);">Windows-</div>
<div class="t" style="left:140.13px;top:837px;font-size:15.5px;color:#1e1e1e;transform:scaleX(0.9389);">DotNETRuntim...</div>
<div class="t" style="left:265.35px;top:837px;font-size:15.5px;color:#1e1e1e;transform:scaleX(0.9330);">[ClrInstanceID,</div>
<div class="t" style="left:364.27px;top:837px;font-size:15.5px;color:#1e1e1e;transform:scaleX(1.0044);">0]</div>
<div class="t" style="left:753.94px;top:837px;font-size:15.5px;color:#1e1e1e;transform:scaleX(0.9441);">1249</div>
<div style="left:0px;top:885px;width:792px;height:1px;background:#eceef6;"></div>
<div class="t" style="left:3.53px;top:864px;font-size:15.5px;color:#1e1e1e;transform:scaleX(1.0178);">Microsoft-</div>
<div class="t" style="left:73.58px;top:864px;font-size:15.5px;color:#1e1e1e;transform:scaleX(0.9755);">Windows-</div>
<div class="t" style="left:140.13px;top:864px;font-size:15.5px;color:#1e1e1e;transform:scaleX(0.9389);">DotNETRuntim...</div>
<div class="t" style="left:265.35px;top:864px;font-size:15.5px;color:#1e1e1e;transform:scaleX(0.9330);">[ClrInstanceID,</div>
<div class="t" style="left:364.27px;top:864px;font-size:15.5px;color:#1e1e1e;transform:scaleX(1.0044);">0]</div>
<div class="t" style="left:753.94px;top:864px;font-size:15.5px;color:#1e1e1e;transform:scaleX(0.9441);">1249</div>
<div style="left:1184px;top:443px;width:23px;height:425px;background:#e8e8ec;"></div>
<div style="left:1189px;top:464px;width:13px;height:146px;background:#c2c3c9;"></div>
<svg class="a" style="left:1189px;top:449px" width="14" height="9"><path d="M0.8 8L7 1.3L13.2 8Z" fill="#868999"/></svg>
<svg class="a" style="left:1189px;top:853px" width="14" height="9"><path d="M0.8 1.3L7 8L13.2 1.3Z" fill="#868999"/></svg>
<div style="left:1207px;top:443px;width:251px;height:425px;background:#f7f9fe;"></div>
<div style="left:1207px;top:443px;width:1px;height:425px;background:#cdd2ea;"></div>
<div style="left:1208px;top:443px;width:250px;height:32px;background:#cfd5ee;"></div>
<div class="t" style="left:1264.20px;top:450px;font-size:15.5px;color:#1e1e1e;transform:scaleX(0.9896);">Additional</div>
<div class="t" style="left:1335.10px;top:450px;font-size:15.5px;color:#1e1e1e;transform:scaleX(0.9568);">Properties</div>
<div class="t" style="left:1242.30px;top:597px;font-size:15.5px;color:#1e1e1e;transform:scaleX(1.0389);">No</div>
<div class="t" style="left:1266.76px;top:597px;font-size:15.5px;color:#1e1e1e;transform:scaleX(1.0197);">additional</div>
<div class="t" style="left:1337.11px;top:597px;font-size:15.5px;color:#1e1e1e;transform:scaleX(0.9855);">properties</div>
<div class="t" style="left:1410.14px;top:597px;font-size:15.5px;color:#1e1e1e;transform:scaleX(1.0250);">to</div>
<div class="t" style="left:1244.28px;top:617px;font-size:15.5px;color:#1e1e1e;transform:scaleX(0.9863);">display.</div>
<div class="t" style="left:1297.91px;top:617px;font-size:15.5px;color:#1e1e1e;transform:scaleX(0.9247);">Click</div>
<div class="t" style="left:1333.30px;top:617px;font-size:15.5px;color:#1e1e1e;transform:scaleX(0.8000);">a</div>
<div class="t" style="left:1344.62px;top:617px;font-size:15.5px;color:#1e1e1e;transform:scaleX(0.9792);">row</div>
<div class="t" style="left:1374.74px;top:617px;font-size:15.5px;color:#1e1e1e;transform:scaleX(1.0333);">to</div>
<div class="t" style="left:1391.90px;top:617px;font-size:15.5px;color:#1e1e1e;transform:scaleX(0.9382);">view</div>
<div class="t" style="left:1239.97px;top:637px;font-size:15.5px;color:#1e1e1e;transform:scaleX(1.0104);">additional</div>
<div class="t" style="left:1310.12px;top:637px;font-size:15.5px;color:#1e1e1e;transform:scaleX(0.9811);">properties</div>
<div class="t" style="left:1382.67px;top:637px;font-size:15.5px;color:#1e1e1e;transform:scaleX(0.9257);">for</div>
<div class="t" style="left:1404.44px;top:637px;font-size:15.5px;color:#1e1e1e;transform:scaleX(1.0279);">the</div>
<div class="t" style="left:1312.99px;top:657px;font-size:15.5px;color:#1e1e1e;transform:scaleX(0.9695);">event.</div>
<div style="left:1468px;top:1px;width:433px;height:27px;background:#40568d;"></div>
<div class="t" style="left:1472.10px;top:6px;font-size:15.5px;color:#ffffff;transform:scaleX(0.9582);">Diagnostics</div>
<div class="t" style="left:1552.25px;top:6px;font-size:15.5px;color:#ffffff;transform:scaleX(0.9237);">Trace</div>
<div class="t" style="left:1592.32px;top:6px;font-size:15.5px;color:#ffffff;transform:scaleX(0.9461);">Explorer</div>
<svg class="a" style="left:1838px;top:10px" width="12" height="7"><path d="M0.8 0.8H11L5.9 6.2Z" fill="#a8b3db"/></svg>
<svg class="a" style="left:1859px;top:6px" width="11" height="16"><path d="M2.7 1.2H8.3V8.7M2.7 1.2V8.7" stroke="#a8b3db" stroke-width="1.3" fill="none"/><rect x="5.6" y="1.2" width="2.7" height="7.5" fill="#a8b3db"/><rect x="0.8" y="8.4" width="9.4" height="1.5" fill="#a8b3db"/><rect x="4.9" y="9.9" width="1.3" height="5.2" fill="#a8b3db"/></svg>
<svg class="a" style="left:1879px;top:8px" width="14" height="12"><path d="M1.3 1L12.7 11M12.7 1L1.3 11" stroke="#a8b3db" stroke-width="1.7" fill="none"/></svg>
<div style="left:1468px;top:28px;width:433px;height:816px;background:#ffffff;"></div>
<div class="t" style="left:1473.85px;top:36px;font-size:15.5px;color:#1e1e1e;transform:scaleX(1.0006);">Dotnet</div>
<div class="t" style="left:1523.36px;top:36px;font-size:15.5px;color:#1e1e1e;transform:scaleX(0.9105);">Trace</div>
<div class="t" style="left:1562.67px;top:36px;font-size:15.5px;color:#1e1e1e;transform:scaleX(0.9730);">Options:</div>
<div class="t" style="left:1473.46px;top:68px;font-size:15.5px;color:#1e1e1e;transform:scaleX(0.9956);">Profile:</div>
<div class="t" style="left:1473.49px;top:99px;font-size:15.5px;color:#1e1e1e;transform:scaleX(0.9714);">Format:</div>
<div class="t" style="left:1473.13px;top:130px;font-size:15.5px;color:#1e1e1e;transform:scaleX(1.0200);">Duration</div>
<div class="t" style="left:1535.99px;top:130px;font-size:15.5px;color:#1e1e1e;transform:scaleX(0.9083);">(hh:mm:ss):</div>
<div class="t" style="left:1473.47px;top:159px;font-size:13px;color:#000;transform:scaleX(1.0635);font-weight:700;">Note:</div>
<div class="t" style="left:1511.41px;top:159px;font-size:13px;color:#000;transform:scaleX(0.9760);font-weight:700;">00:00:00</div>
<div class="t" style="left:1566.29px;top:159px;font-size:13px;color:#000;transform:scaleX(1.0252);font-weight:700;">duration</div>
<div class="t" style="left:1622.86px;top:159px;font-size:13px;color:#000;transform:scaleX(0.9637);font-weight:700;">runs</div>
<div class="t" style="left:1654.47px;top:159px;font-size:13px;color:#000;transform:scaleX(1.0066);font-weight:700;">the</div>
<div class="t" style="left:1678.48px;top:159px;font-size:13px;color:#000;transform:scaleX(0.9258);font-weight:700;">Trace</div>
<div class="t" style="left:1714.37px;top:159px;font-size:13px;color:#000;transform:scaleX(1.0492);font-weight:700;">tool</div>
<div class="t" style="left:1742.59px;top:159px;font-size:13px;color:#000;transform:scaleX(1.0821);font-weight:700;">until</div>
<div class="t" style="left:1775.90px;top:159px;font-size:13px;color:#000;transform:scaleX(1.0051);font-weight:700;">stopped</div>
<div style="left:1708px;top:62px;width:137px;height:26px;box-sizing:border-box;border:1px solid #acacac;background:linear-gradient(#f0f0f0,#e5e5e5);"></div>
<div style="left:1707px;top:93px;width:137px;height:26px;box-sizing:border-box;border:1px solid #acacac;background:linear-gradient(#f0f0f0,#e5e5e5);"></div>
<div class="t" style="left:1714.58px;top:68px;font-size:15.5px;color:#1e1e1e;transform:scaleX(0.9964);">cpu-sampling</div>
<div class="t" style="left:1713.52px;top:99px;font-size:15.5px;color:#1e1e1e;transform:scaleX(0.9839);">nettrace</div>
<svg class="a" style="left:1829.5px;top:70.5px" width="9" height="7"><path d="M0.9 1L4.3 4.9L7.7 1" stroke="#444" stroke-width="1.6" fill="none"/></svg>
<svg class="a" style="left:1828.3px;top:101.5px" width="9" height="7"><path d="M0.9 1L4.3 4.9L7.7 1" stroke="#444" stroke-width="1.6" fill="none"/></svg>
<div style="left:1703px;top:125px;width:138px;height:25px;background:#fff;box-sizing:border-box;border:1px solid #abadb3;"></div>
<div class="t" style="left:1707.04px;top:128px;font-size:15.5px;color:#1e1e1e;transform:scaleX(0.8964);">00:00:00</div>
<div style="left:1474px;top:191px;width:94px;height:25px;background:#dddddd;box-sizing:border-box;border:1px solid #707070;"></div>
<div class="t" style="left:1497.26px;top:195px;font-size:15.5px;color:#1e1e1e;transform:scaleX(0.9909);">Collect</div>
<div class="t" style="left:1474.07px;top:230px;font-size:15.5px;color:#1e1e1e;transform:scaleX(0.8816);">Trace</div>
<div class="t" style="left:1513.64px;top:230px;font-size:15.5px;color:#1e1e1e;transform:scaleX(1.0526);">file</div>
<div class="t" style="left:1537.88px;top:230px;font-size:15.5px;color:#1e1e1e;transform:scaleX(1.0204);">list:</div>
<div style="left:1468px;top:256px;width:433px;height:588px;background:#fff;box-sizing:border-box;border:1px solid #abadb3;"></div>
<div style="left:1471px;top:258px;width:428px;height:38px;background:#f4f4f4;box-sizing:border-box;border:1px solid #dadada;"></div>
<div class="t" style="left:1482.95px;top:269px;font-size:15.5px;color:#1e1e1e;transform:scaleX(1.0447);">dotnet-</div>
<div class="t" style="left:1533.61px;top:269px;font-size:15.5px;color:#1e1e1e;transform:scaleX(0.9868);">loader</div>
<div class="t" style="left:1575.50px;top:269px;font-size:15.5px;color:#1e1e1e;transform:scaleX(0.9312);">20231013_</div>
<div class="t" style="left:1648.31px;top:269px;font-size:15.5px;color:#1e1e1e;transform:scaleX(0.8820);">131408</div>
<div class="t" style="left:1694.10px;top:269px;font-size:15.5px;color:#1e1e1e;transform:scaleX(0.9490);">.nettrace</div>
<div class="t" style="left:1482.95px;top:306px;font-size:15.5px;color:#1e1e1e;transform:scaleX(1.0447);">dotnet-</div>
<div class="t" style="left:1533.61px;top:306px;font-size:15.5px;color:#1e1e1e;transform:scaleX(0.9868);">loader</div>
<div class="t" style="left:1575.50px;top:306px;font-size:15.5px;color:#1e1e1e;transform:scaleX(0.9312);">20231013_</div>
<div class="t" style="left:1648.31px;top:306px;font-size:15.5px;color:#1e1e1e;transform:scaleX(0.8842);">172821</div>
<div class="t" style="left:1694.10px;top:306px;font-size:15.5px;color:#1e1e1e;transform:scaleX(0.9490);">.nettrace</div>
<div class="t" style="left:1482.95px;top:344px;font-size:15.5px;color:#1e1e1e;transform:scaleX(1.0447);">dotnet-</div>
<div class="t" style="left:1533.61px;top:344px;font-size:15.5px;color:#1e1e1e;transform:scaleX(0.9868);">loader</div>
<div class="t" style="left:1575.50px;top:344px;font-size:15.5px;color:#1e1e1e;transform:scaleX(0.9312);">20231013_</div>
<div class="t" style="left:1648.31px;top:344px;font-size:15.5px;color:#1e1e1e;transform:scaleX(0.8798);">173124</div>
<div class="t" style="left:1694.10px;top:344px;font-size:15.5px;color:#1e1e1e;transform:scaleX(0.9490);">.nettrace</div>
<div style="left:1468px;top:844px;width:152px;height:23px;background:#40568d;"></div>
<div style="left:1622px;top:844px;width:152px;height:24px;background:#f7f9fe;"></div>
<div style="left:1775px;top:844px;width:126px;height:23px;background:#40568d;"></div>
<div class="t" style="left:1473.80px;top:848px;font-size:15.5px;color:#ffffff;transform:scaleX(0.9608);">Diagnostics</div>
<div class="t" style="left:1554.02px;top:848px;font-size:15.5px;color:#ffffff;transform:scaleX(0.9079);">GCDu...</div>
<div class="t" style="left:1627.60px;top:848px;font-size:15.5px;color:#1e1e1e;transform:scaleX(0.9595);">Diagnostics</div>
<div class="t" style="left:1709.46px;top:848px;font-size:15.5px;color:#1e1e1e;transform:scaleX(0.9026);">Trace</div>
<div class="t" style="left:1748.12px;top:848px;font-size:15.5px;color:#1e1e1e;transform:scaleX(0.8630);">E...</div>
<div class="t" style="left:1780.95px;top:848px;font-size:15.5px;color:#ffffff;transform:scaleX(0.9935);">Solution</div>
<div class="t" style="left:1839.49px;top:848px;font-size:15.5px;color:#ffffff;transform:scaleX(0.9675);">Explorer</div>
<svg class="a" style="left:219px;top:8px" width="13" height="12"><path d="M1 5.8H4.6M4.6 1.2V10.4M4.6 3.2H10.2V8.2H4.6" stroke="#6e4c22" stroke-width="1.3" fill="none"/><rect x="4.6" y="6.4" width="5.6" height="2.2" fill="#6e4c22"/></svg>
<svg class="a" style="left:242px;top:8px" width="15" height="13"><path d="M1.6 1.3L12.8 11M12.8 1.3L1.6 11" stroke="#6e4c22" stroke-width="1.7" fill="none"/></svg>
<svg class="a" style="left:1421px;top:12px" width="12" height="7"><path d="M0.9 0.9H10.9L5.9 6Z" fill="#dde2f7"/></svg>
<svg class="a" style="left:1443px;top:6px" width="14" height="14"><g transform="translate(7,7.1)"><rect x="-1.2" y="-6.2" width="2.4" height="3" fill="#dde2f7" transform="rotate(0)"/><rect x="-1.2" y="-6.2" width="2.4" height="3" fill="#dde2f7" transform="rotate(45)"/><rect x="-1.2" y="-6.2" width="2.4" height="3" fill="#dde2f7" transform="rotate(90)"/><rect x="-1.2" y="-6.2" width="2.4" height="3" fill="#dde2f7" transform="rotate(135)"/><rect x="-1.2" y="-6.2" width="2.4" height="3" fill="#dde2f7" transform="rotate(180)"/><rect x="-1.2" y="-6.2" width="2.4" height="3" fill="#dde2f7" transform="rotate(225)"/><rect x="-1.2" y="-6.2" width="2.4" height="3" fill="#dde2f7" transform="rotate(270)"/><rect x="-1.2" y="-6.2" width="2.4" height="3" fill="#dde2f7" transform="rotate(315)"/><circle r="4.3" fill="#dde2f7"/><circle r="2.4" fill="#5d6b99"/><circle r="1" fill="#f3f5ff"/></g></svg>
<svg class="a" style="left:7px;top:34px" width="22" height="22"><path d="M15.6 3H3V19H16.2" stroke="#fff" stroke-width="4" fill="none" stroke-linejoin="round"/><path d="M6 10.6H14.5L12.5 7L14 5.6L20 10.8L14 16.6L12.5 15L14.5 12.6H6Z" fill="#fff" stroke="#fff" stroke-width="2"/><rect x="4" y="4" width="9" height="14" fill="#dde1f2"/><path d="M15.6 3H3V19H16.2" stroke="#636363" stroke-width="1.9" fill="none"/><path d="M7 10.9H18.4M13.6 6.4L18.6 10.9L13.6 15.6" stroke="#2b4f9e" stroke-width="2" fill="none"/></svg>
<svg class="a" style="left:98px;top:33px" width="22" height="22"><circle cx="8.7" cy="8.7" r="6.3" fill="#fff"/><path d="M12.4 12.4L18.6 18.6" stroke="#fff" stroke-width="5" stroke-linecap="round"/><circle cx="8.7" cy="8.7" r="4.9" fill="#e6eaf8" stroke="#3c3c3c" stroke-width="1.4"/><path d="M5.7 8.6H11.7M8.7 5.6V11.6" stroke="#4a6fb5" stroke-width="1.3"/><path d="M12.4 12.4L18.4 18.4" stroke="#3c3c3c" stroke-width="3"/></svg>
<svg class="a" style="left:187px;top:34px" width="22" height="22"><circle cx="9" cy="9.2" r="6.3" fill="#f4f5fb"/><path d="M12.8 13L18.6 18.8" stroke="#f4f5fb" stroke-width="5" stroke-linecap="round"/><circle cx="9" cy="9.2" r="4.9" fill="#edeffa" stroke="#7b7b7b" stroke-width="1.4"/><path d="M6.2 9.2H11.8" stroke="#adadad" stroke-width="1.5"/><path d="M12.8 13L18.4 18.6" stroke="#6f6f6f" stroke-width="3"/></svg>
<svg class="a" style="left:296px;top:33px" width="22" height="22"><path d="M3 3L11 11M11 3L3 11" stroke="#fff" stroke-width="3.6"/><rect x="4.8" y="12.2" width="4.3" height="9.6" fill="#fff"/><rect x="8.6" y="13.9" width="4.3" height="7.9" fill="#fff"/><rect x="12.5" y="7.2" width="4.4" height="14.6" fill="#fff"/><rect x="16.3" y="12.2" width="4.4" height="9.6" fill="#fff"/><path d="M3.4 3.4L10.6 10.6M10.6 3.4L3.4 10.6" stroke="#a1260d" stroke-width="1.25"/><rect x="5.8" y="13.2" width="2.3" height="7.6" fill="#424242"/><rect x="9.6" y="14.9" width="2.3" height="5.9" fill="#424242"/><rect x="13.5" y="8.2" width="2.4" height="12.6" fill="#424242"/><rect x="17.3" y="13.2" width="2.4" height="7.6" fill="#424242"/></svg>
</div></div></body></html>
